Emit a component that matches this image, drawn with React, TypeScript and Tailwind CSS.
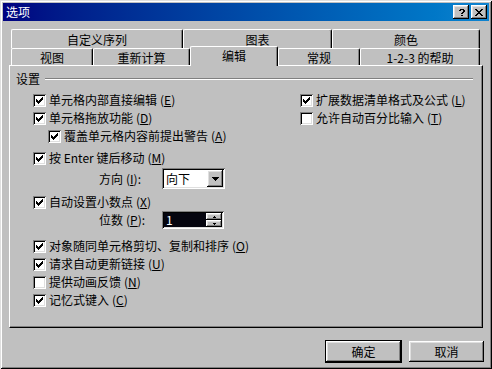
import React from 'react';

// Win98 bevels
const raised =
  'shadow-[inset_-1px_-1px_0_#000,inset_1px_1px_0_#fff,inset_-2px_-2px_0_#808080,inset_2px_2px_0_#dfdfdf]';
const sunken =
  'shadow-[inset_1px_1px_0_#808080,inset_-1px_-1px_0_#fff,inset_2px_2px_0_#000,inset_-2px_-2px_0_#dfdfdf]';

const CHECK = ['......X', '.....XX', 'X...XXX', 'XX.XXX.', 'XXXXX..', '.XXX...', '..X....'];
const CLOSE = ['XX....XX', '.XX..XX.', '..XXXX..', '...XX...', '..XXXX..', '.XX..XX.', 'XX....XX'];
const HELP = ['.XXXX.', 'XX..XX', '....XX', '...XX.', '..XX..', '......', '..XX..'];
const DOWN = ['XXXXXXX', '.XXXXX.', '..XXX..', '...X...'];
const SPIN_UP = ['..X..', '.XXX.'];
const SPIN_DOWN = ['.XXX.', '..X..'];

function Pixels({ rows, color = '#000' }: { rows: string[]; color?: string }) {
  const w = rows[0].length;
  const h = rows.length;
  return (
    <svg width={w} height={h} viewBox={`0 0 ${w} ${h}`} shapeRendering="crispEdges" className="block">
      {rows.flatMap((r, y) =>
        [...r].map((c, x) =>
          c === 'X' ? <rect key={`${x}-${y}`} x={x} y={y} width={1} height={1} fill={color} /> : null
        )
      )}
    </svg>
  );
}

const Key = ({ k }: { k: string }) => (
  <span className="ml-[3px]">
    (<span className="underline underline-offset-1">{k}</span>)
  </span>
);

const Box = ({ checked }: { checked: boolean }) => (
  <span className={`w-[13px] h-[13px] shrink-0 bg-white pl-[3px] pt-[3px] ${sunken}`}>
    {checked && <Pixels rows={CHECK} />}
  </span>
);

interface CheckProps {
  label: React.ReactNode;
  k: string;
  checked?: boolean;
  className?: string;
}

const Check = ({ label, k, checked = true, className = '' }: CheckProps) => (
  <div className={`flex items-center h-[18px] whitespace-nowrap ${className}`}>
    <Box checked={checked} />
    <span className="ml-[3px] leading-[18px]">
      {label}
      <Key k={k} />
    </span>
  </div>
);

const Tab = ({ label, w, active = false }: { label: string; w: string; active?: boolean }) => (
  <div
    className={`${w} ${
      active ? 'relative z-10 h-[20px] mb-[-1px] pb-[2px]' : 'h-full pt-[2px]'
    } flex items-center justify-center bg-[#c0c0c0] rounded-t-[2px] border-t border-l border-r border-t-white border-l-white border-r-black shadow-[inset_-1px_0_0_#808080] whitespace-nowrap`}
  >
    {label}
  </div>
);

const Button = ({ label, isDefault = false }: { label: string; isDefault?: boolean }) => (
  <div
    className={`w-[75px] h-[21px] flex items-center justify-center bg-[#c0c0c0] ${raised} ${
      isDefault ? 'outline outline-1 outline-black' : ''
    }`}
  >
    {label}
  </div>
);

export default function App() {
  return (
    <div
      className={`w-[492px] h-[369px] bg-[#c0c0c0] p-[3px] flex flex-col text-[12px] text-black font-['Noto_Sans_CJK_SC','Liberation_Sans',sans-serif] shadow-[inset_1px_1px_0_#dfdfdf,inset_-1px_-1px_0_#000,inset_2px_2px_0_#fff,inset_-2px_-2px_0_#808080]`}
    >
      {/* Title bar */}
      <div className="h-[18px] flex items-center pl-[3px] pr-[2px] bg-gradient-to-r from-[#000080] to-[#1084d0]">
        <span className="text-white leading-[18px] flex-1">选项</span>
        <div className={`w-[16px] h-[14px] bg-[#c0c0c0] flex items-center justify-center pl-[1px] ${raised}`}>
          <Pixels rows={HELP} />
        </div>
        <div className={`ml-[2px] w-[16px] h-[14px] bg-[#c0c0c0] flex items-center justify-center ${raised}`}>
          <Pixels rows={CLOSE} />
        </div>
      </div>

      <div className="px-[6px] flex flex-col">
        {/* Tabs, back row */}
        <div className="mt-[8px] ml-[2px] h-[19px] flex">
          <Tab label="自定义序列" w="w-[172px]" />
          <Tab label="图表" w="w-[149px]" />
          <Tab label="颜色" w="w-[148px]" />
        </div>
        {/* Tabs, front row */}
        <div className="ml-[2px] h-[17px] flex items-end">
          <Tab label="视图" w="w-[82px]" />
          <Tab label="重新计算" w="w-[97px]" />
          <Tab label="编辑" w="w-[88px]" active />
          <Tab label="常规" w="w-[82px]" />
          <Tab label="1-2-3 的帮助" w="w-[120px]" />
        </div>

        {/* Panel */}
        <div className="h-[263px] flex flex-col border border-t-white border-l-white border-r-black border-b-black shadow-[inset_-1px_-1px_0_#808080]">
          <div className="mt-[6px] h-[14px] flex items-center pl-[6px] pr-[9px]">
            <span className="leading-[14px]">设置</span>
            <div className="ml-[5px] flex-1 h-[2px] border-t border-b border-t-[#808080] border-b-white" />
          </div>

          <div className="mt-[5px] pl-[23px] flex">
            <div className="w-[267px] flex flex-col">
              <Check label="单元格内部直接编辑" k="E" />
              <Check label="单元格拖放功能" k="D" />
              <Check label="覆盖单元格内容前提出警告" k="A" className="ml-[15px]" />
              <Check label="按 Enter 键后移动" k="M" className="mt-[4px]" />

              <div className="mt-[1px] h-[21px] flex items-center">
                <span className="ml-[66px] w-[63px] whitespace-nowrap">
                  方向<Key k="I" />:
                </span>
                <div className={`w-[63px] h-[21px] bg-white flex items-center p-[2px] ${sunken}`}>
                  <span className="flex-1 pl-[2px] leading-[17px]">向下</span>
                  <div className={`w-[16px] h-[17px] bg-[#c0c0c0] flex items-center justify-center ${raised}`}>
                    <Pixels rows={DOWN} />
                  </div>
                </div>
              </div>

              <Check label="自动设置小数点" k="X" className="mt-[4px]" />

              <div className="h-[18px] flex items-center">
                <span className="ml-[66px] w-[63px] whitespace-nowrap">
                  位数<Key k="P" />:
                </span>
                <div className={`w-[62px] h-[18px] bg-white flex p-[2px] ${sunken}`}>
                  <div className="flex-1 bg-[#05050f] text-white pl-[2px] leading-[14px]">1</div>
                  <div className="w-[16px] flex flex-col">
                    <div className={`h-[7px] bg-[#c0c0c0] flex items-center justify-center ${raised}`}>
                      <Pixels rows={SPIN_UP} />
                    </div>
                    <div className={`h-[7px] bg-[#c0c0c0] flex items-center justify-center ${raised}`}>
                      <Pixels rows={SPIN_DOWN} />
                    </div>
                  </div>
                </div>
              </div>

              <Check label="对象随同单元格剪切、复制和排序" k="O" className="mt-[8px]" />
              <Check label="请求自动更新链接" k="U" />
              <Check label="提供动画反馈" k="N" checked={false} />
              <Check label="记忆式键入" k="C" />
            </div>

            <div className="flex flex-col">
              <Check label="扩展数据清单格式及公式" k="L" />
              <Check label="允许自动百分比输入" k="T" checked={false} />
            </div>
          </div>
        </div>

        {/* Dialog buttons */}
        <div className="mt-[13px] mr-[-1px] flex justify-end gap-[8px]">
          <Button label="确定" isDefault />
          <Button label="取消" />
        </div>
      </div>
    </div>
  );
}
